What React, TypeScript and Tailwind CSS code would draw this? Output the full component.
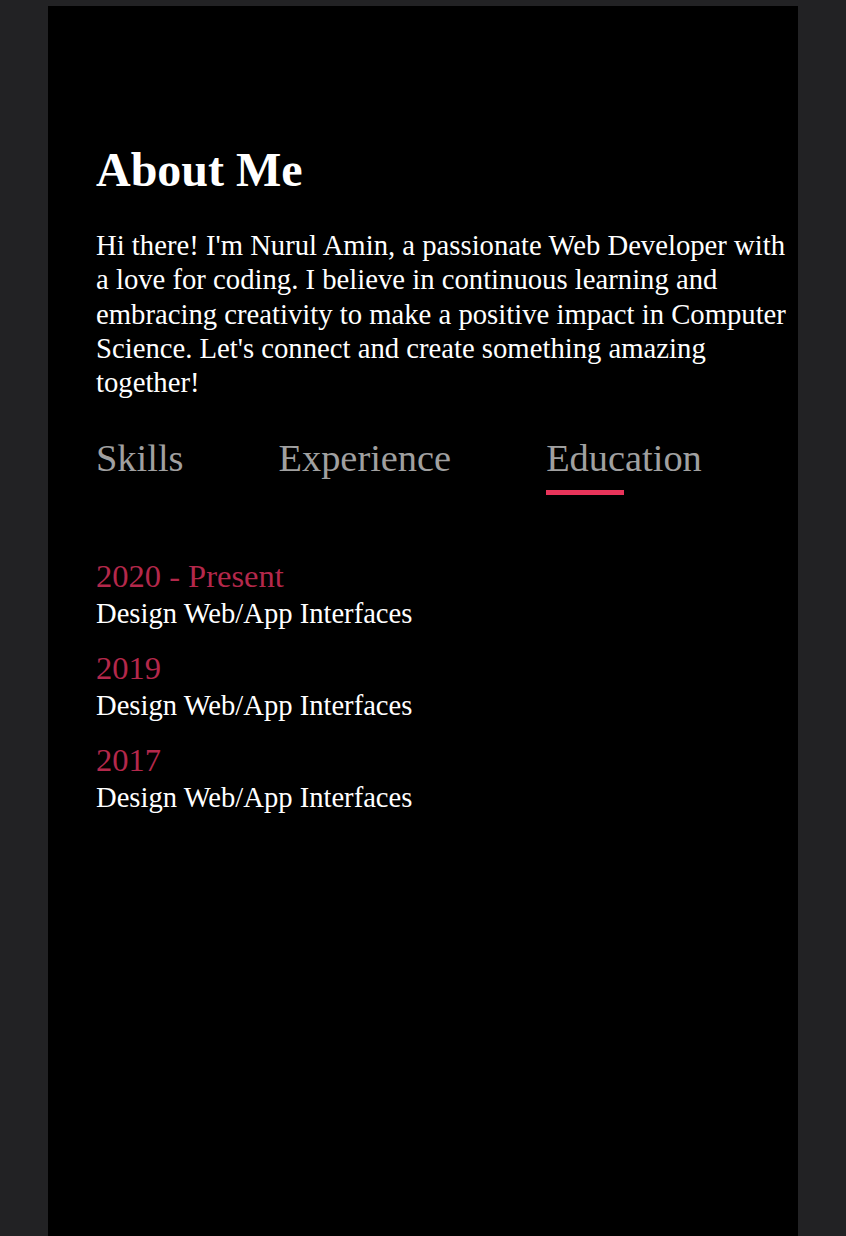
import React from "react";

const serif = { fontFamily: '"Liberation Serif", "Times New Roman", serif' };

const entries = [
  { year: "2020 - Present", title: "Design Web/App Interfaces" },
  { year: "2019", title: "Design Web/App Interfaces" },
  { year: "2017", title: "Design Web/App Interfaces" },
];

export default function App() {
  return (
    <div className="min-h-[1236px] bg-[#222224] pt-[6px] px-[48px]" style={serif}>
      <div className="bg-black min-h-[1230px] w-[750px] pl-[48px] pr-0 pt-[140px] text-white">
        <h1 className="text-[48px] font-bold leading-[48px]">About Me</h1>
        <p className="mt-[34px] text-[28.7px] leading-[34.3px] text-white">
          Hi there! I'm Nurul Amin, a passionate Web Developer with a love for coding. I believe in continuous learning and embracing creativity to make a positive impact in Computer Science. Let's connect and create something amazing together!
        </p>
        <div className="mt-[40px] flex items-start text-[38.4px] leading-[38.4px] text-[#a0a0a0]">
          <div className="mr-[95px]">Skills</div>
          <div className="mr-[95px]">Experience</div>
          <div className="flex flex-col">
            <span>Education</span>
            <span className="mt-[12px] h-[5px] w-1/2 bg-[#e8345a]"></span>
          </div>
        </div>
        <ul className="mt-[62px] flex flex-col gap-[16px]">
          {entries.map((e, i) => (
            <li key={i} className="flex flex-col">
              <span className="text-[32.5px] leading-[38px] text-[#b4284b]">{e.year}</span>
              <span className="text-[28.6px] leading-[38px] text-white">{e.title}</span>
            </li>
          ))}
        </ul>
      </div>
    </div>
  );
}
